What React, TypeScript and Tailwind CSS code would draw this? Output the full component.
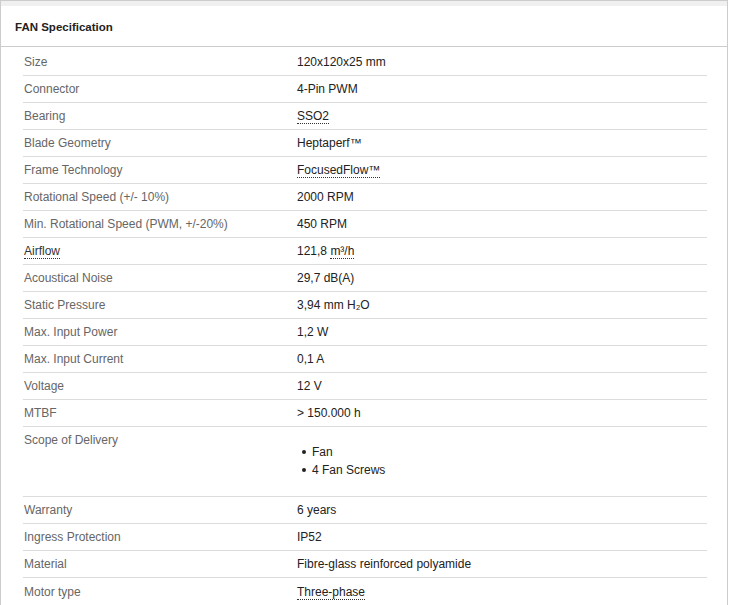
import React from 'react';

type Row = { label: React.ReactNode; value: React.ReactNode };

const Dotted = ({ children }: { children: React.ReactNode }) => (
  <span className="border-b border-dotted border-[#333]">{children}</span>
);

const rowsTop: Row[] = [
  { label: 'Size', value: '120x120x25 mm' },
  { label: 'Connector', value: '4-Pin PWM' },
  { label: 'Bearing', value: <Dotted>SSO2</Dotted> },
  { label: 'Blade Geometry', value: 'Heptaperf™' },
  { label: 'Frame Technology', value: <Dotted>FocusedFlow™</Dotted> },
  { label: 'Rotational Speed (+/- 10%)', value: '2000 RPM' },
  { label: 'Min. Rotational Speed (PWM, +/-20%)', value: '450 RPM' },
  {
    label: <span className="text-[#333]"><Dotted>Airflow</Dotted></span>,
    value: <>121,8 <Dotted>m³/h</Dotted></>,
  },
  { label: 'Acoustical Noise', value: '29,7 dB(A)' },
  { label: 'Static Pressure', value: '3,94 mm H₂O' },
  { label: 'Max. Input Power', value: '1,2 W' },
  { label: 'Max. Input Current', value: '0,1 A' },
  { label: 'Voltage', value: '12 V' },
  { label: 'MTBF', value: '> 150.000 h' },
];

const rowsBottom: Row[] = [
  { label: 'Warranty', value: '6 years' },
  { label: 'Ingress Protection', value: 'IP52' },
  { label: 'Material', value: 'Fibre-glass reinforced polyamide' },
  { label: 'Motor type', value: <Dotted>Three-phase</Dotted> },
];

function SpecRow({ row, last }: { row: Row; last?: boolean }) {
  return (
    <div className={`flex h-[27px] items-center ${last ? '' : 'border-b border-[#dcdcdc]'}`}>
      <div className="w-[274px] pl-px text-[#666]">{row.label}</div>
      <div className="text-[#222]">{row.value}</div>
    </div>
  );
}

export default function App() {
  return (
    <div
      className="w-[728px] border border-[#cccccc] bg-white text-[12px] leading-[26px]"
      style={{ fontFamily: '"Liberation Sans", Arial, sans-serif' }}
    >
      <div className="h-[5px] bg-[#f0f0f0]" />
      <div className="flex h-[41px] items-center border-b border-[#cccccc] pl-[14px] pt-px text-[11.5px] font-bold text-[#222]">
        FAN Specification
      </div>
      <div className="ml-[22px] mt-[2px] w-[684px]">
        {rowsTop.map((r, i) => (
          <SpecRow key={i} row={r} />
        ))}
        <div className="flex h-[70px] border-b border-[#dcdcdc]">
          <div className="w-[274px] pl-px text-[#666]">Scope of Delivery</div>
          <ul className="mt-4 text-[#222] leading-[18px]">
            <li className="flex items-center">
              <span className="ml-[5px] mr-[6px] inline-block h-[4px] w-[4px] rounded-full bg-[#222]" />
              Fan
            </li>
            <li className="flex items-center">
              <span className="ml-[5px] mr-[6px] inline-block h-[4px] w-[4px] rounded-full bg-[#222]" />
              4 Fan Screws
            </li>
          </ul>
        </div>
        {rowsBottom.map((r, i) => (
          <SpecRow key={i} row={r} last={i === rowsBottom.length - 1} />
        ))}
      </div>
    </div>
  );
}
